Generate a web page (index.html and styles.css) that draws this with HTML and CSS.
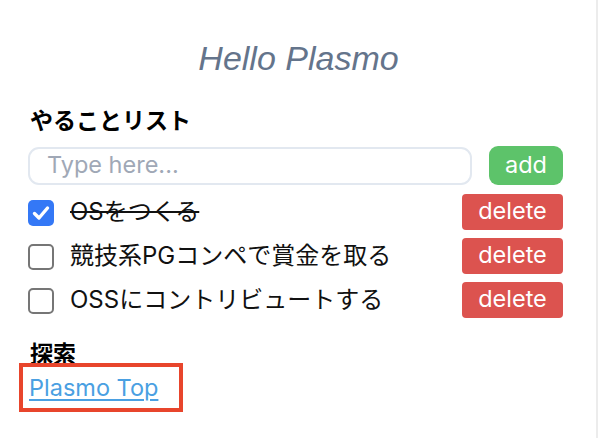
FILE: index.html
```html
<!DOCTYPE html>
<html lang="ja">
<head>
<meta charset="utf-8">
<title>Hello Plasmo</title>
<link rel="stylesheet" href="styles.css">
</head>
<body>
<div class="popup">
  <h1 class="title">Hello Plasmo</h1>

  <h2 class="section">やることリスト</h2>
  <div class="form-row">
    <input class="todo-input" type="text" placeholder="Type here...">
    <button class="btn btn-add">add</button>
  </div>

  <ul class="todo-list">
    <li class="todo">
      <span class="check checked">
        <svg viewBox="0 0 26 26" width="26" height="26"><path d="M6.5 13.5 L11 18 L19.5 8" fill="none" stroke="#fff" stroke-width="3.4" stroke-linecap="round" stroke-linejoin="round"/></svg>
      </span>
      <span class="todo-text done">OSをつくる</span>
      <button class="btn btn-delete">delete</button>
    </li>
    <li class="todo">
      <span class="check"></span>
      <span class="todo-text">競技系PGコンペで賞金を取る</span>
      <button class="btn btn-delete">delete</button>
    </li>
    <li class="todo">
      <span class="check"></span>
      <span class="todo-text">OSSにコントリビュートする</span>
      <button class="btn btn-delete">delete</button>
    </li>
  </ul>

  <h2 class="section section-explore">探索</h2>
  <div class="link-row">
    <a class="link" href="#">Plasmo Top</a>
    <span class="highlight"></span>
  </div>
</div>
</body>
</html>
```

FILE: styles.css
```css
* { box-sizing: border-box; }

html, body {
  margin: 0;
  padding: 0;
  background: #ffffff;
}

body {
  font-family: "Inter", "Noto Sans CJK JP", sans-serif;
  color: #111111;
}

.popup {
  width: 598px;
  height: 438px;
  padding: 38px 33px 0 28px;
  border-right: 2px solid #ececec;
}

.title {
  margin: 0;
  font-family: "Liberation Sans", Arial, sans-serif;
  font-style: italic;
  font-weight: 400;
  font-size: 34px;
  line-height: 40px;
  text-align: center;
  color: #64748b;
  padding-left: 6px;
}

.section {
  margin: 25px 0 0 2px;
  font-family: "Noto Sans CJK JP", sans-serif;
  font-weight: 700;
  font-size: 23px;
  line-height: 32px;
  color: #000;
}

.form-row {
  display: flex;
  align-items: center;
  gap: 17px;
  margin-top: 11px;
  height: 39px;
}

.todo-input {
  width: 444px;
  height: 38px;
  border: 2px solid #e2e8f0;
  border-radius: 11px;
  padding: 0 0 2px 17px;
  font-family: "Inter", sans-serif;
  font-size: 23.5px;
  color: #111;
  outline: none;
  background: #fff;
}

.todo-input::placeholder {
  color: #a0a8b6;
}

.btn {
  border: none;
  color: #ffffff;
  font-family: "Inter", sans-serif;
  font-size: 23.5px;
  line-height: 1;
  padding: 0 0 2px;
  cursor: pointer;
}

.btn-add {
  width: 74px;
  height: 39px;
  border-radius: 9px;
  background: #5dc36a;
}

.todo-list {
  list-style: none;
  margin: 9px 0 0;
  padding: 0;
  display: flex;
  flex-direction: column;
  gap: 8px;
}

.todo {
  display: flex;
  align-items: center;
  height: 36px;
}

.check {
  flex: none;
  width: 26px;
  height: 26px;
  border-radius: 5px;
  border: 2px solid #767676;
  background: #fff;
  margin-right: 16px;
  margin-top: 1px;
}

.check.checked {
  border: none;
  background: #3478f6;
}

.check svg { display: block; }

.todo-text {
  flex: 1;
  font-size: 24px;
  line-height: 32px;
  color: #111;
}

.todo-text.done {
  text-decoration: line-through;
  text-decoration-thickness: 2px;
}

.btn-delete {
  width: 101px;
  height: 36px;
  border-radius: 4px;
  background: #dc534f;
}

.section-explore {
  margin-top: 18px;
}

.link-row {
  position: relative;
  margin-top: 6px;
  padding-left: 1px;
  line-height: 28px;
}

.link {
  font-family: "Inter", sans-serif;
  font-size: 23.5px;
  color: #4aa0e2;
  text-decoration: underline;
  text-decoration-thickness: 2px;
  text-underline-offset: 3px;
}

.highlight {
  position: absolute;
  left: -9px;
  top: -11px;
  width: 164px;
  height: 49px;
  border: 4px solid #e8452c;
  pointer-events: none;
}
```
